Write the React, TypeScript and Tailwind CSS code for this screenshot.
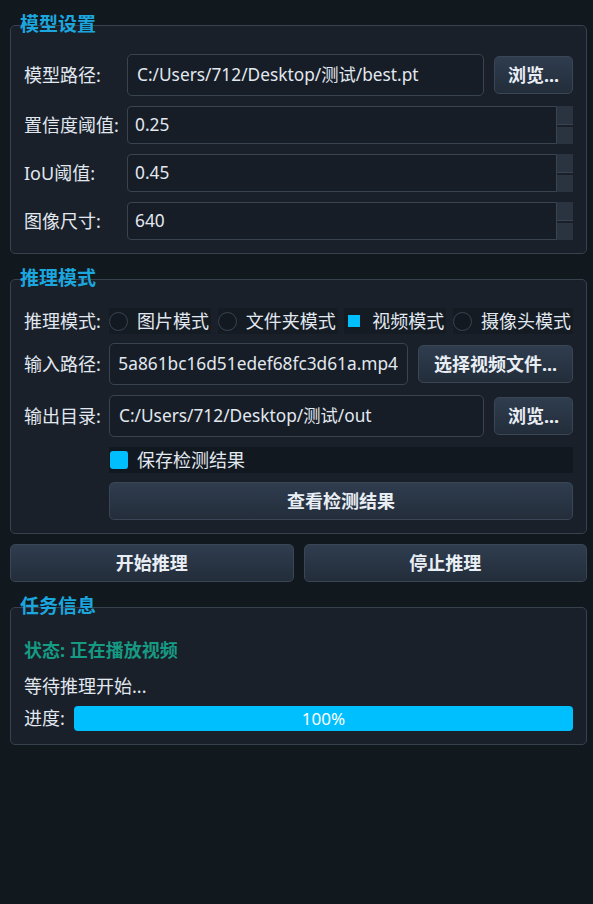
import React from "react";

const GroupBox = ({
  title,
  children,
  pad = "pt-[28px]",
}: {
  title: string;
  children: React.ReactNode;
  pad?: string;
}) => {
  return (
    <div className="mt-[12px]">
      <div className="relative z-10 pl-[10px] h-[24px] leading-[24px] text-[19px] font-bold text-[#1ba6de]">
        {title}
      </div>
      <div
        className={`-mt-[11px] rounded-[5px] border border-[#38424e] bg-[#19202a] px-[13px] pb-[13px] ${pad}`}
      >
        {children}
      </div>
    </div>
  );
};

const Btn = ({ label, className = "" }: { label: string; className?: string }) => (
  <button
    className={`h-[38px] shrink-0 rounded-[5px] border border-[#3a4555] bg-gradient-to-b from-[#2f3d4f] to-[#232d3a] text-[18px] font-bold text-[#e9eef5] ${className}`}
  >
    {label}
  </button>
);

const TextBox = ({ value, alignEnd = false }: { value: string; alignEnd?: boolean }) => (
  <div className="flex h-[42px] min-w-0 flex-1 items-center rounded-[5px] border border-[#3a4450] bg-[#161d26] px-[9px] text-[17.3px] text-[#e2e8f0]">
    <div
      dir={alignEnd ? "rtl" : "ltr"}
      className="w-full overflow-hidden whitespace-nowrap"
    >
      {value}
    </div>
  </div>
);

const SpinBox = ({ value }: { value: string }) => (
  <div className="flex h-[38px] flex-1">
    <div className="flex flex-1 items-center rounded-l-[4px] border border-[#3a4450] bg-[#161d26] pl-[7px] text-[17.3px] text-[#e2e8f0]">
      {value}
    </div>
    <div className="flex w-[16px] flex-col gap-[2px]">
      <div className="flex-1 border-b border-[#3a4450] bg-[#2a3340]" />
      <div className="flex-1 bg-[#2a3340]" />
    </div>
  </div>
);

const Radio = ({ label, checked = false }: { label: string; checked?: boolean }) => (
  <div className="flex h-[26px] items-center bg-[#141b23] pr-[2px]">
    <div className="flex h-[19px] w-[19px] items-center justify-center">
      {checked ? (
        <div className="h-[12px] w-[12px] bg-[#00bfff]" />
      ) : (
        <div className="h-[19px] w-[19px] rounded-full border border-[#3a4450] bg-[#121920]" />
      )}
    </div>
    <span className="ml-[9px]">{label}</span>
  </div>
);

export default function App() {
  return (
    <div className="flex min-h-[904px] w-[593px] flex-col bg-[#11181e] pl-[10px] pr-[6px] font-['Noto_Sans','Noto_Sans_CJK_SC',sans-serif] text-[18px] text-[#e2e8f0]">
      {/* 模型设置 */}
      <GroupBox title="模型设置">
        <div className="flex h-[42px] items-center">
          <div className="w-[103px] shrink-0">模型路径:</div>
          <TextBox value="C:/Users/712/Desktop/测试/best.pt" />
          <Btn label="浏览..." className="ml-[10px] w-[79px]" />
        </div>
        <div className="mt-[10px] flex h-[38px] items-center">
          <div className="w-[103px] shrink-0">置信度阈值:</div>
          <SpinBox value="0.25" />
        </div>
        <div className="mt-[10px] flex h-[38px] items-center">
          <div className="w-[103px] shrink-0">IoU阈值:</div>
          <SpinBox value="0.45" />
        </div>
        <div className="mt-[10px] flex h-[38px] items-center">
          <div className="w-[103px] shrink-0">图像尺寸:</div>
          <SpinBox value="640" />
        </div>
      </GroupBox>

      {/* 推理模式 */}
      <GroupBox title="推理模式">
        <div className="flex h-[26px] items-center">
          <div className="w-[85px] shrink-0">推理模式:</div>
          <div className="flex flex-1 items-center justify-between">
            <Radio label="图片模式" />
            <Radio label="文件夹模式" />
            <Radio label="视频模式" checked />
            <Radio label="摄像头模式" />
          </div>
        </div>
        <div className="mt-[9px] flex h-[42px] items-center">
          <div className="w-[85px] shrink-0">输入路径:</div>
          <TextBox value="C:/Users/712/Desktop/测试/videos/e5a861bc16d51edef68fc3d61a.mp4" alignEnd />
          <Btn label="选择视频文件..." className="ml-[10px] w-[155px]" />
        </div>
        <div className="mt-[10px] flex h-[42px] items-center">
          <div className="w-[85px] shrink-0">输出目录:</div>
          <TextBox value="C:/Users/712/Desktop/测试/out" />
          <Btn label="浏览..." className="ml-[10px] w-[79px]" />
        </div>
        <div className="ml-[85px] mt-[10px] flex h-[26px] items-center bg-[#121820]">
          <div className="ml-[1px] h-[18px] w-[18px] rounded-[3px] bg-[#00bfff]" />
          <span className="ml-[9px]">保存检测结果</span>
        </div>
        <div className="ml-[85px] mt-[9px] flex">
          <Btn label="查看检测结果" className="flex-1" />
        </div>
      </GroupBox>

      <div className="mt-[10px] flex gap-[10px]">
        <Btn label="开始推理" className="flex-1" />
        <Btn label="停止推理" className="flex-1" />
      </div>

      {/* 任务信息 */}
      <GroupBox title="任务信息" pad="pt-[30px]">
        <div className="h-[24px] leading-[24px] font-bold text-[#169a82]">状态: 正在播放视频</div>
        <div className="mt-[12px] h-[24px] leading-[24px]">等待推理开始...</div>
        <div className="mt-[8px] flex h-[25px] items-center">
          <div className="w-[50px] shrink-0">进度:</div>
          <div className="flex h-[25px] flex-1 items-center justify-center rounded-[4px] bg-[#00bfff] text-[17px] text-white">
            100%
          </div>
        </div>
      </GroupBox>
    </div>
  );
}
